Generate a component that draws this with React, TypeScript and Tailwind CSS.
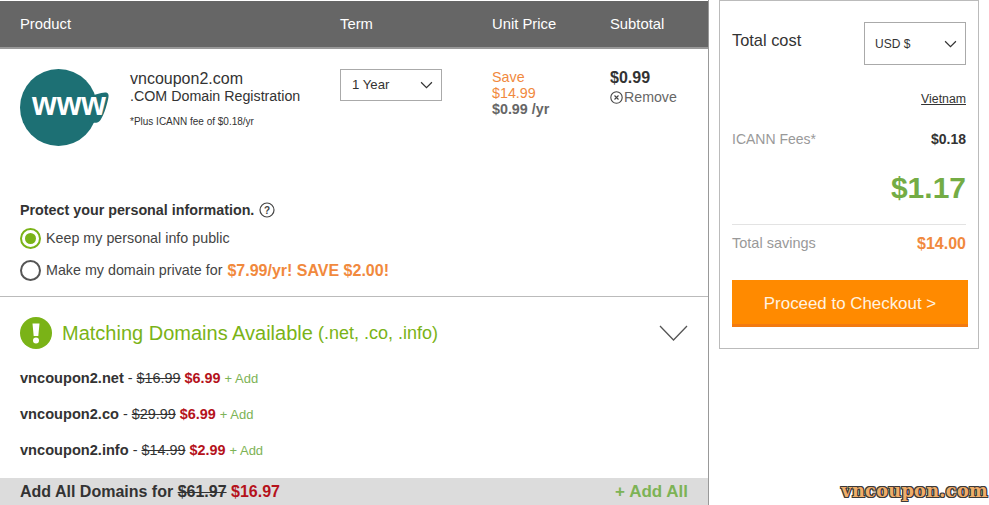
import React from 'react';

const domains = [
  { name: 'vncoupon2.net', was: '$16.99', now: '$6.99' },
  { name: 'vncoupon2.co', was: '$29.99', now: '$6.99' },
  { name: 'vncoupon2.info', was: '$14.99', now: '$2.99' },
];

const Chevron = ({ className }: { className: string }) => (
  <svg className={className} viewBox="0 0 12 7" fill="none" stroke="currentColor" strokeWidth={1.1}>
    <path d="M1 1l5 5 5-5" />
  </svg>
);

const App: React.FC = () => {
  return (
    <div className="relative flex h-[505px] w-[989px] overflow-hidden bg-white font-['Liberation_Sans',Arial,sans-serif] text-[#333]">
      {/* Cart */}
      <div className="flex h-[505px] w-[709px] shrink-0 flex-col border-r border-[#999] pt-px">
        <div className="flex h-[48px] shrink-0 items-center border-b-2 border-[#999] bg-[#666] text-[14.8px] text-white">
          <span className="ml-5 w-[320px]">Product</span>
          <span className="w-[152px]">Term</span>
          <span className="w-[118px]">Unit Price</span>
          <span>Subtotal</span>
        </div>

        {/* Product row */}
        <div className="flex h-[139px] shrink-0 pl-5 pt-5">
          <svg className="h-[78px] w-[90px] shrink-0" viewBox="0 0 90 78">
            <circle cx="38.5" cy="38.5" r="38.5" fill="#1d7074" />
            <path d="M70 27c5-1 10-3 15-3.500 3 0 4 2 3.500 4.500-1 6-4 17-8 23-2 3-6 3.500-11 2z" fill="#1d7074" />
            <text x="12" y="46" fontFamily="Liberation Sans" fontWeight="700" fontSize="33" textLength="74" lengthAdjust="spacingAndGlyphs" fill="#fff">www</text>
          </svg>
          <div className="ml-5 w-[210px] pt-[1px]">
            <div className="text-[16px] leading-[18px]">vncoupon2.com</div>
            <div className="text-[14.25px] leading-[17px]">.COM Domain Registration</div>
            <div className="mt-[11px] text-[10px] leading-[12px]">*Plus ICANN fee of $0.18/yr</div>
          </div>
          <div className="w-[152px]">
            <div className="flex h-[32px] w-[102px] items-center justify-between border border-[#aaa] pl-[11px] pr-[8px] text-[13.2px]">
              <span>1 Year</span>
              <Chevron className="h-[8px] w-[13px] text-[#333]" />
            </div>
          </div>
          <div className="w-[118px] text-[14.3px] leading-[16px]">
            <div className="text-[#f1893d]">Save</div>
            <div className="text-[#f1893d]">$14.99</div>
            <div className="font-bold text-[#666]">$0.99 /yr</div>
          </div>
          <div>
            <div className="text-[16px] font-bold leading-[18px]">$0.99</div>
            <div className="mt-px flex items-center text-[14.2px] leading-[18px] text-[#666]">
              <svg className="h-[13px] w-[13px]" viewBox="0 0 13 13" fill="none" stroke="#444" strokeWidth={1.1}>
                <circle cx="6.5" cy="6.5" r="5.7" />
                <path d="M4.500 4.500l4 4m0-4l-4 4" />
              </svg>
              <span className="ml-px">Remove</span>
            </div>
          </div>
        </div>

        {/* Privacy */}
        <div className="h-[109px] shrink-0 border-b border-[#bbb] pl-5 pt-[13px]">
          <div className="flex items-center text-[14.3px] font-bold leading-[18px]">
            Protect your personal information.
            <svg className="ml-[5px] h-[16px] w-[16px]" viewBox="0 0 16 16" fill="none">
              <circle cx="8" cy="8" r="7" stroke="#444" strokeWidth="1.2" />
              <text x="8" y="11.5" textAnchor="middle" fontSize="10" fontFamily="Liberation Sans" fill="#444">?</text>
            </svg>
          </div>
          <div className="mt-[9px] flex h-[21px] items-center text-[14.3px]">
            <span className="flex h-[21px] w-[21px] items-center justify-center rounded-full border-2 border-[#7ab317]">
              <span className="h-[11px] w-[11px] rounded-full bg-[#7ab317]" />
            </span>
            <span className="ml-[5px] text-[#444]">Keep my personal info public</span>
          </div>
          <div className="mt-[11px] flex h-[21px] items-center text-[14.3px]">
            <span className="h-[21px] w-[21px] rounded-full border-2 border-[#555]" />
            <span className="ml-[5px] text-[#444]">Make my domain private for</span>
            <span className="ml-[5px] text-[16px] font-bold text-[#f1893d]">$7.99/yr! SAVE $2.00!</span>
          </div>
        </div>

        {/* Matching domains */}
        <div className="flex-1 pt-[20px]">
          <div className="flex h-[32px] items-center pl-5 pr-[20px]">
            <span className="flex h-[32px] w-[32px] items-center justify-center rounded-full bg-[#7ab317]">
              <svg className="h-[22px] w-[8px]" viewBox="0 0 8 22" fill="#fff">
                <path d="M0.5 1.5h7l-1.2 12.5h-4.6z" />
                <circle cx="4" cy="18.5" r="3" />
              </svg>
            </span>
            <span className="ml-[10px] text-[20px] text-[#7ab317]">Matching Domains Available</span>
            <span className="ml-[5px] text-[18px] text-[#7ab317]">(.net, .co, .info)</span>
            <svg className="ml-auto h-[17px] w-[29px] text-[#555]" viewBox="0 0 29 17" fill="none" stroke="currentColor" strokeWidth={1.3}>
              <path d="M1 1l13.5 14L28 1" />
            </svg>
          </div>
          <div className="mt-[12px] flex h-[117px] flex-col pl-5">
            {domains.map((d) => (
              <div key={d.name} className="flex h-[36px] shrink-0 items-center text-[14.4px]">
                <span className="text-[14.6px] font-bold">{d.name}</span>
                <span className="ml-1">-</span>
                <span className="ml-1 line-through">{d.was}</span>
                <span className="ml-1 font-bold text-[#b5121b]">{d.now}</span>
                <span className="ml-1 text-[13px] text-[#7db356]">+ Add</span>
              </div>
            ))}
          </div>
          <div className="flex h-[27px] items-center justify-between bg-[#dcdcdc] pl-5 pr-5 text-[16px] font-bold">
            <span>
              Add All Domains for <span className="line-through">$61.97</span>{' '}
              <span className="text-[#b5121b]">$16.97</span>
            </span>
            <span className="text-[17px] text-[#7db356]">+ Add All</span>
          </div>
        </div>
      </div>

      {/* Summary */}
      <div className="ml-[10px] h-[349px] w-[260px] shrink-0 self-start border border-[#bbb] px-3 pt-[21px]">
        <div className="flex justify-between">
          <span className="pt-[8px] text-[16.4px] leading-[20px]">Total cost</span>
          <div className="flex h-[43px] w-[102px] items-center justify-between border border-[#aaa] pl-[10px] pr-[8px] text-[12px]">
            <span>USD $</span>
            <Chevron className="h-[8px] w-[13px] text-[#333]" />
          </div>
        </div>
        <div className="mt-[27px] text-right text-[12.3px] leading-[14px] underline">Vietnam</div>
        <div className="mt-[23px] flex items-center justify-between">
          <span className="text-[14px] text-[#999]">ICANN Fees*</span>
          <span className="text-[14px] font-bold">$0.18</span>
        </div>
        <div className="mt-[20px] text-right text-[30px] font-bold leading-[36px] text-[#74ac45]">$1.17</div>
        <div className="mt-[18px] flex h-[37px] items-center justify-between border-t border-[#e3e3e3] pt-[2px]">
          <span className="text-[14.5px] text-[#999]">Total savings</span>
          <span className="text-[16px] font-bold text-[#f1893d]">$14.00</span>
        </div>
        <div className="mt-[19px] -mr-[2px] flex h-[47px] items-center justify-center border-b-[3px] border-[#f27a10] bg-[#ff8a00] pt-[3px] text-[16.9px] text-[#fff3e0]">
          Proceed to Checkout &gt;
        </div>
      </div>

      {/* Watermark */}
      <div className="absolute bottom-[4px] right-[1px] font-['DejaVu_Serif',serif] text-[17.7px] font-bold leading-[20px] tracking-[0.3px] text-[#f0ad68] [text-shadow:-1px_0_#3a3a3a,1px_0_#3a3a3a,0_-1px_#3a3a3a,0_1px_#3a3a3a,1px_1px_#3a3a3a,-1px_-1px_#3a3a3a,1px_-1px_#3a3a3a,-1px_1px_#3a3a3a]">
        vncoupon.com
      </div>
    </div>
  );
};

export default App;
